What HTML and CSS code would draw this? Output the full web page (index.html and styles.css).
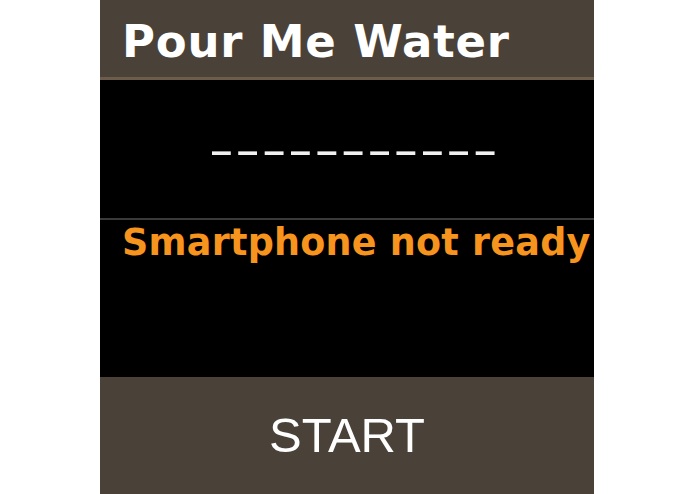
FILE: index.html
```html
<!DOCTYPE html>
<html>
<head>
<meta charset="utf-8">
<title>Pour Me Water</title>
<link rel="stylesheet" href="styles.css">
</head>
<body>
<div class="panel">
  <div class="header"><h1 class="title">Pour Me Water</h1></div>
  <div class="display"><span class="dashes">-----------</span></div>
  <div class="status">Smartphone not ready</div>
  <div class="footer">START</div>
</div>
</body>
</html>
```
FILE: styles.css
```css
html, body {
  margin: 0;
  padding: 0;
  background: #ffffff;
}
body {
  padding-right: 1px;
}
.panel {
  width: 494px;
  height: 494px;
  margin: 0 auto;
  display: flex;
  flex-direction: column;
  background: #000000;
}
.header {
  box-sizing: content-box;
  height: 62px;
  padding: 15px 0 0 22px;
  background: #4a4238;
  border-bottom: 3px solid #6b5d49;
}
.title {
  margin: 0;
  font-family: "DejaVu Sans", Verdana, sans-serif;
  font-weight: bold;
  font-size: 45px;
  letter-spacing: 0.8px;
  line-height: normal;
  color: #ffffff;
  white-space: nowrap;
}
.display {
  height: 140px;
  box-sizing: border-box;
  padding-top: 44px;
  text-align: center;
  border-bottom: 2px solid #3a3a3a;
}
.dashes {
  display: inline-block;
  font-family: "DejaVu Sans", sans-serif;
  font-size: 44px;
  letter-spacing: 0.4px;
  line-height: normal;
  color: #f0f0f0;
  transform: scaleX(1.62);
  margin-left: 13px;
}
.status {
  height: 157px;
  box-sizing: border-box;
  padding: 1px 0 0 22px;
  font-family: "DejaVu Sans", Verdana, sans-serif;
  font-weight: bold;
  font-size: 36.5px;
  letter-spacing: 0.25px;
  line-height: normal;
  color: #f7941d;
  white-space: nowrap;
}
.footer {
  flex: 1;
  background: #4a4238;
  padding-top: 30px;
  text-align: center;
  font-family: "Liberation Sans", Arial, sans-serif;
  font-size: 49px;
  line-height: normal;
  color: #ffffff;
}
```
